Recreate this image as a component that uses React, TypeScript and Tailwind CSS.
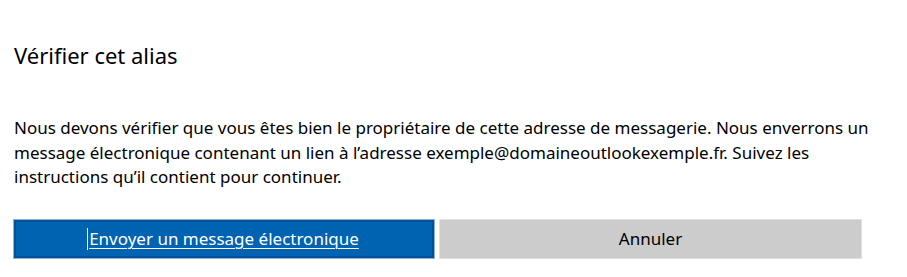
import React from 'react';

const App: React.FC = () => {
  return (
    <div className="h-[277px] w-[907px] bg-white font-['Noto_Sans',sans-serif] text-black">
      <div className="pl-[14px] pt-[40px]">
        <h2 className="text-[22px] leading-[30px]">Vérifier cet alias</h2>

        <p className="mt-[46px] text-[17px] leading-[24.5px]">
          Nous devons vérifier que vous êtes bien le propriétaire de cette adresse de messagerie. Nous enverrons un
          <br />
          message électronique contenant un lien à l’adresse exemple@domaineoutlookexemple.fr. Suivez les
          <br />
          instructions qu’il contient pour continuer.
        </p>

        {/* Boutons */}
        <div className="-ml-px mt-[29px] flex gap-[4px]">
          <button
            type="button"
            className="relative h-[40px] w-[422px] border border-[#8cb0d8] bg-[#0063b1] text-[17px] text-white"
          >
            <span className="absolute inset-0 border-2 border-[#00509a]"></span>
            <span className="relative underline decoration-1 underline-offset-[3px]">
              <span className="absolute -left-[2px] top-[1px] h-[22px] w-px bg-white"></span>
              Envoyer un message électronique
            </span>
          </button>
          <button
            type="button"
            className="h-[40px] w-[423px] border border-[#e0e0e0] bg-[#cccccc] text-[17px] text-black"
          >
            Annuler
          </button>
        </div>
      </div>
    </div>
  );
};

export default App;
